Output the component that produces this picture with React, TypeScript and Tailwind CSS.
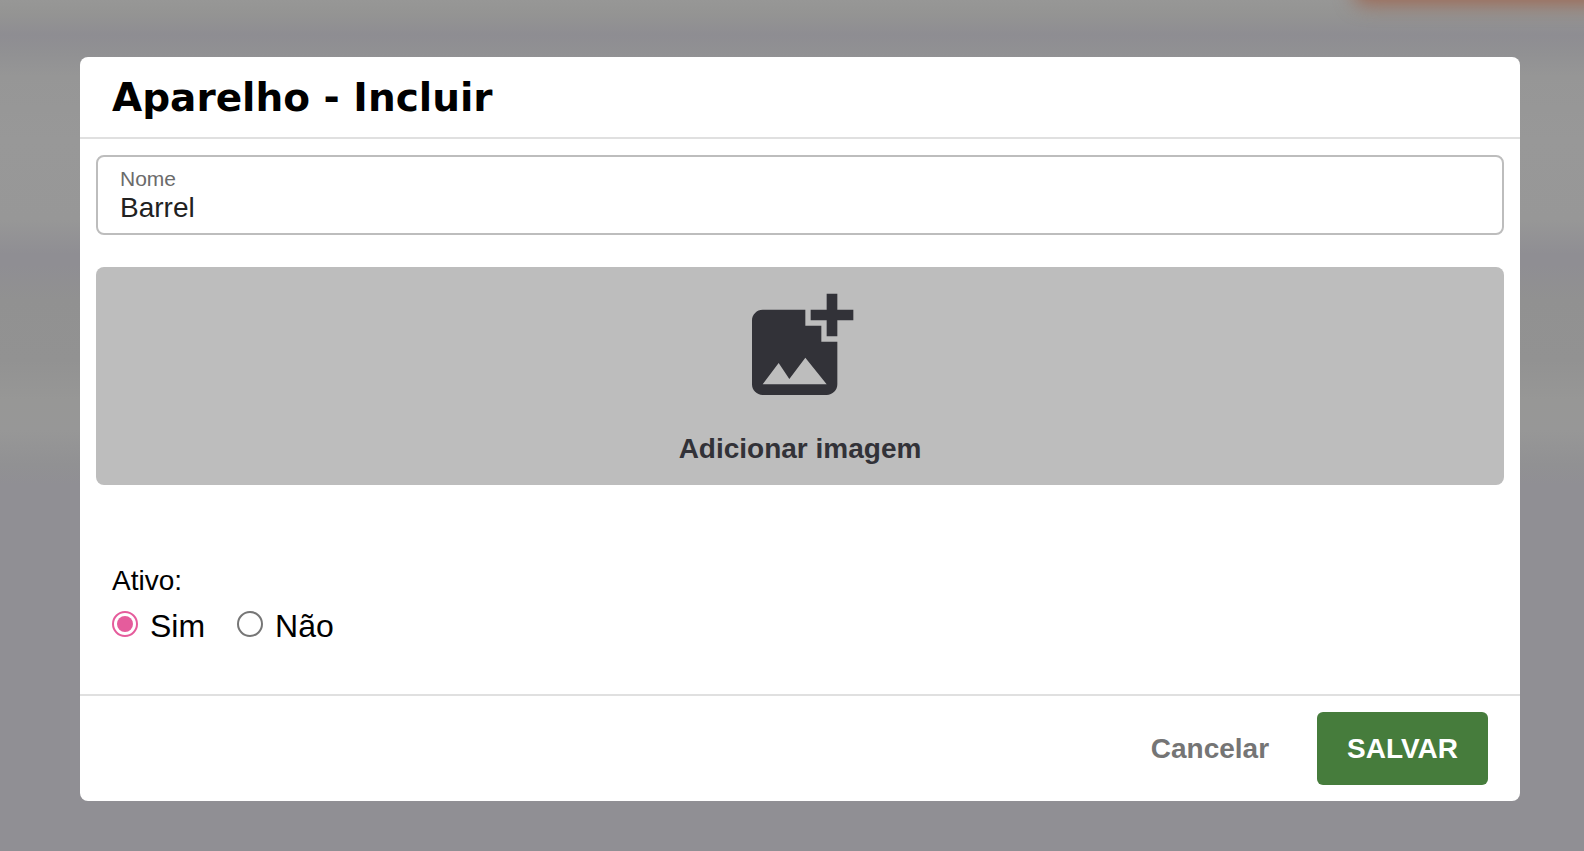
import { useState } from "react";

function AddPhotoIcon() {
  return (
    <svg viewBox="0 0 24 24" className="size-32" fill="currentColor" aria-hidden="true">
      <path d="M19 7v3h-2V7h-3V5h3V2h2v3h3v2h-3zm-3 4V8h-3V5H5c-1.1 0-2 .9-2 2v12c0 1.1.9 2 2 2h12c1.1 0 2-.9 2-2v-8h-3zM5 19l3-4 2 3 3-4 4 5H5z" />
    </svg>
  );
}

type RadioProps = {
  label: string;
  checked: boolean;
  onSelect: () => void;
};

function Radio({ label, checked, onSelect }: RadioProps) {
  return (
    <label className="flex items-center gap-3 text-[32px] leading-10">
      <input
        type="radio"
        name="ativo"
        checked={checked}
        onChange={onSelect}
        className="mb-1 size-[26px] appearance-none rounded-full border-2 border-[#767676] bg-clip-content p-[3px] checked:border-[#e55c9c] checked:bg-[#e55c9c]"
      />
      {label}
    </label>
  );
}

export default function App() {
  const [nome, setNome] = useState("Barrel");
  const [ativo, setAtivo] = useState(true);

  return (
    <div className="relative min-h-screen overflow-hidden bg-[#908f94] bg-[linear-gradient(to_bottom,#979796_0px,#949493_14px,#8e8d92_35px,#919193_54px,#969696_76px,#989898_140px,#979797_220px,#8f8e93_254px,#8f8e93_264px,#919191_300px,#929292_360px,#979796_400px,#979797_430px,#919193_465px,#908f94_485px)] pt-[57px] pr-16 pb-[50px] pl-20 font-['Liberation_Sans',Arial,sans-serif] text-black">
      <div className="absolute -top-12 -right-10 h-13 w-[270px] rounded-xl bg-[#9d6650] blur-[10px]" />
      <form
        role="dialog"
        aria-labelledby="dialog-title"
        onSubmit={(e) => e.preventDefault()}
        className="relative rounded-lg bg-white"
      >
        <header className="border-b-2 border-[#e0e0e0] px-8 pt-5 pb-[18px]">
          <h1
            id="dialog-title"
            className="font-['DejaVu_Sans',sans-serif] text-[39px] leading-[42px] font-bold"
          >
            Aparelho - Incluir
          </h1>
        </header>

        <div className="px-4 pt-4 pb-12">
          <label className="block rounded-lg border-2 border-[#bdbdbd] px-[22px] pt-[10px] pb-2">
            <span className="block text-[21px] leading-6 text-[#6b6b6b]">Nome</span>
            <input
              type="text"
              value={nome}
              onChange={(e) => setNome(e.target.value)}
              className="block h-[34px] w-full text-[28px] leading-[34px] text-[#212121] outline-none"
            />
          </label>

          <button
            type="button"
            className="mt-8 flex w-full flex-col items-center gap-5 rounded-lg bg-[#bdbdbd] pt-4 pb-[18px] text-[28px] leading-9 font-bold text-[#323238]"
          >
            <AddPhotoIcon />
            Adicionar imagem
          </button>

          <fieldset className="mt-20 px-4">
            <legend className="text-[28px] leading-8">Ativo:</legend>
            <div className="mt-[9px] flex gap-8">
              <Radio label="Sim" checked={ativo} onSelect={() => setAtivo(true)} />
              <Radio label="Não" checked={!ativo} onSelect={() => setAtivo(false)} />
            </div>
          </fieldset>
        </div>

        <footer className="flex items-center justify-end gap-12 border-t-2 border-[#e0e0e0] px-8 py-4 text-[28px] leading-[33px] font-bold">
          <button type="button" className="text-[#757575]">
            Cancelar
          </button>
          <button type="submit" className="rounded-md bg-[#467c3c] px-[30px] py-5 text-white">
            SALVAR
          </button>
        </footer>
      </form>
    </div>
  );
}
